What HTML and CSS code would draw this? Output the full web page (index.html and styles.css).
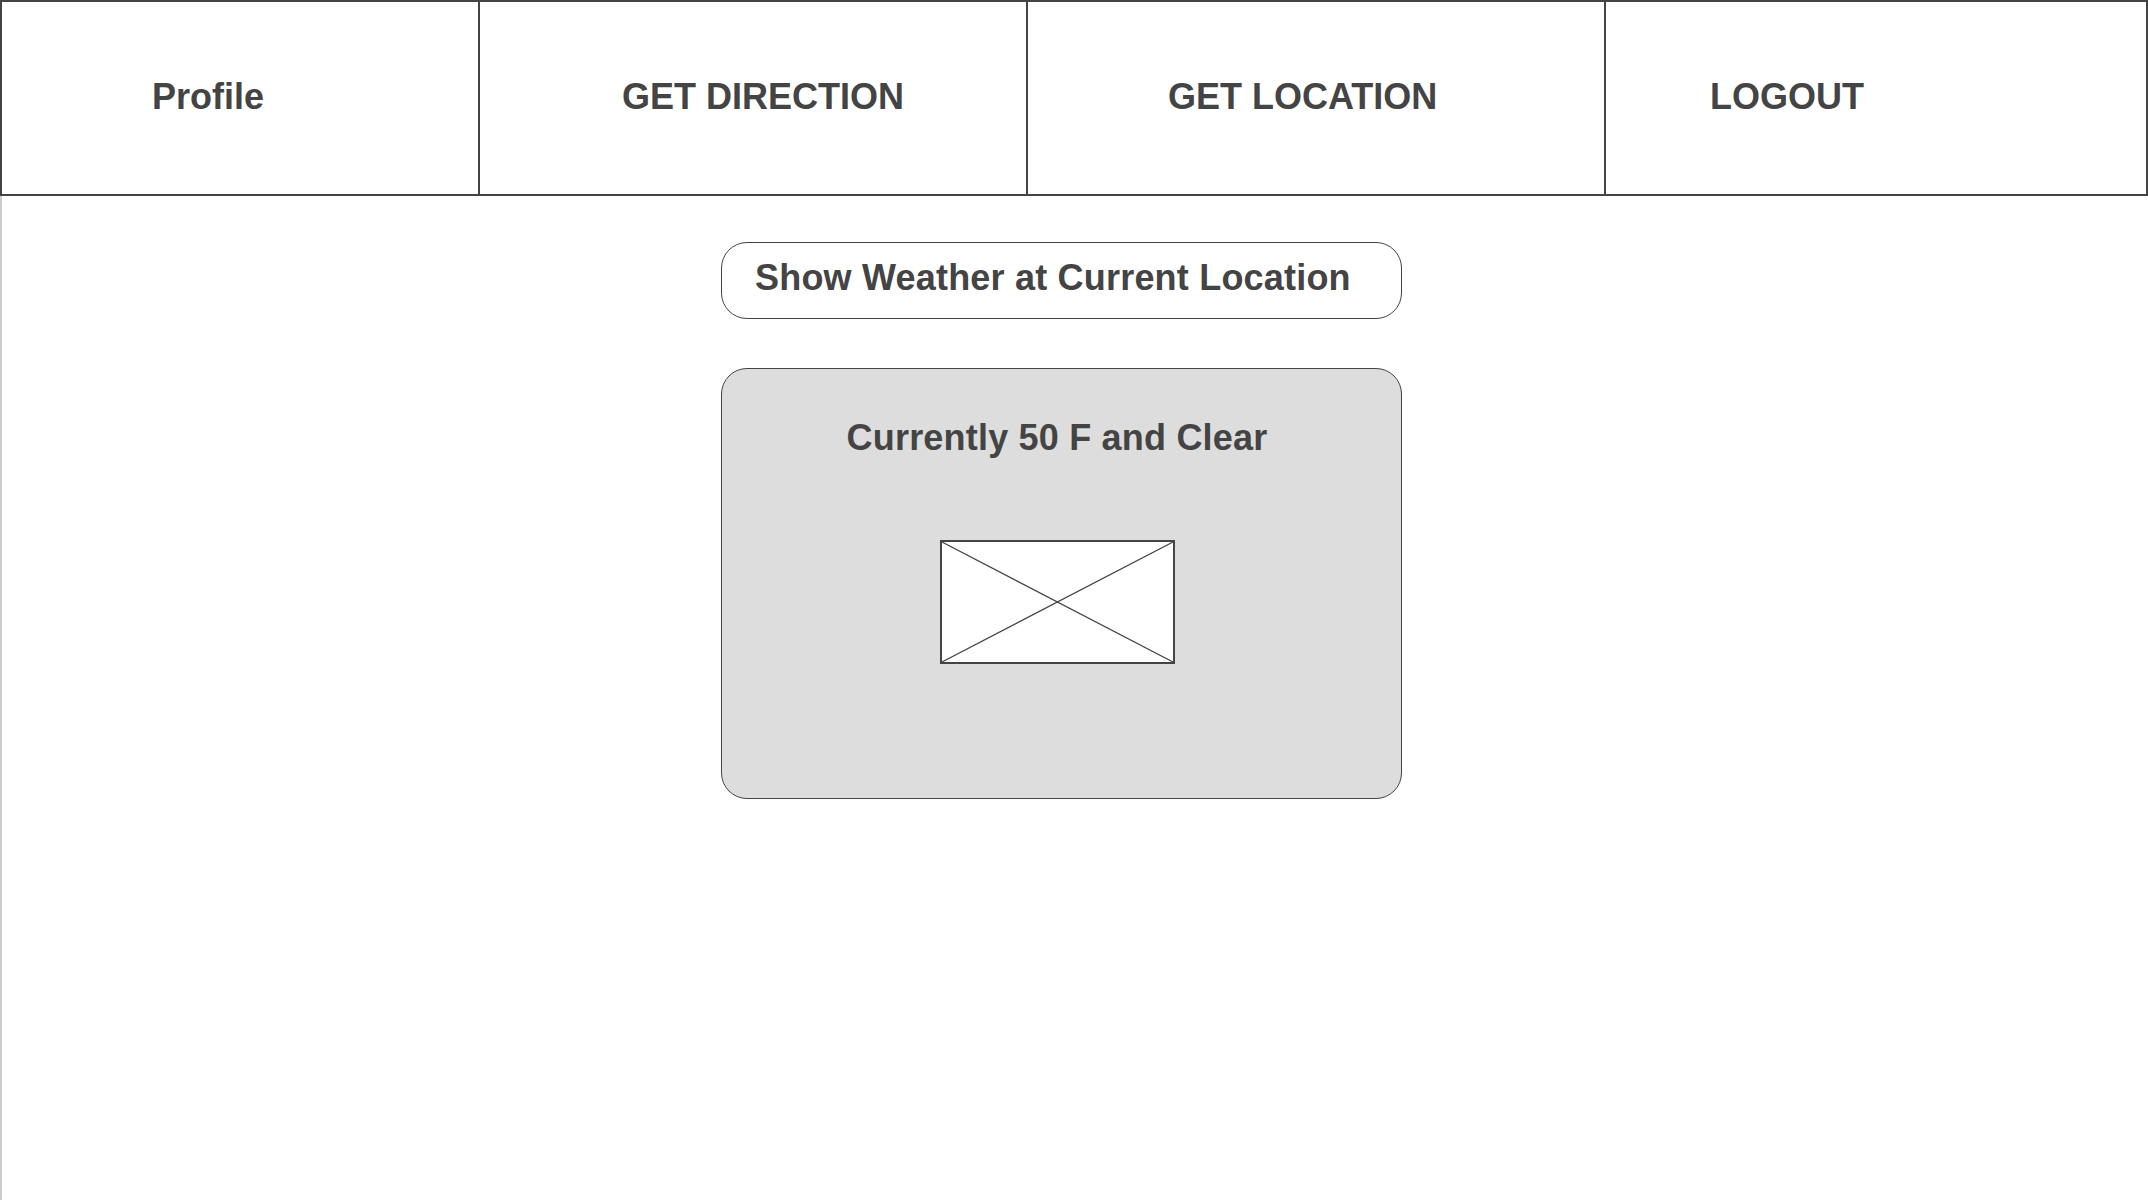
FILE: index.html
```html
<!DOCTYPE html>
<html lang="en">
<head>
<meta charset="utf-8">
<title>Weather</title>
<link rel="stylesheet" href="styles.css">
</head>
<body>
<nav class="nav">
  <div class="nav-cell cell-profile">Profile</div>
  <div class="nav-cell cell-direction">GET DIRECTION</div>
  <div class="nav-cell cell-location">GET LOCATION</div>
  <div class="nav-cell cell-logout">LOGOUT</div>
</nav>
<main class="main">
  <button class="weather-btn" type="button">Show Weather at Current Location</button>
  <section class="card">
    <h2 class="card-title">Currently 50 F and Clear</h2>
    <div class="placeholder">
      <svg width="235" height="124" viewBox="0 0 235 124" xmlns="http://www.w3.org/2000/svg">
        <rect x="1" y="1" width="233" height="122" fill="#ffffff" stroke="#444444" stroke-width="2"/>
        <line x1="2" y1="2" x2="233" y2="122" stroke="#444444" stroke-width="1.4"/>
        <line x1="233" y1="2" x2="2" y2="122" stroke="#444444" stroke-width="1.4"/>
      </svg>
    </div>
  </section>
</main>
</body>
</html>
```

FILE: styles.css
```css
html, body {
  margin: 0;
  padding: 0;
  background: #ffffff;
}

body {
  font-family: "Liberation Sans", Arial, sans-serif;
  color: #444444;
  width: 2148px;
  height: 1200px;
  overflow: hidden;
}

.nav {
  display: flex;
  height: 196px;
  box-sizing: border-box;
  border: 2px solid #444444;
}

.nav-cell {
  display: flex;
  align-items: center;
  box-sizing: border-box;
  font-size: 36px;
  font-weight: bold;
  white-space: nowrap;
  padding-bottom: 3px;
}

.cell-profile {
  width: 478px;
  padding-left: 150px;
  border-right: 2px solid #444444;
}

.cell-direction {
  width: 548px;
  padding-left: 142px;
  border-right: 2px solid #444444;
}

.cell-location {
  width: 578px;
  padding-left: 140px;
  border-right: 2px solid #444444;
}

.cell-logout {
  flex: 1;
  padding-left: 104px;
}

.main {
  box-sizing: border-box;
  height: 1004px;
  border-left: 2px solid #cccccc;
  padding-top: 46px;
  padding-left: 719px;
  display: flex;
  flex-direction: column;
  align-items: flex-start;
}

.weather-btn {
  box-sizing: border-box;
  width: 681px;
  height: 77px;
  margin: 0;
  padding: 14px 0 0 33px;
  border: 1.6px solid #444444;
  border-radius: 26px;
  background: #ffffff;
  font-family: "Liberation Sans", Arial, sans-serif;
  font-size: 36px;
  font-weight: bold;
  letter-spacing: 0.2px;
  color: #444444;
  text-align: left;
  display: flex;
  align-items: flex-start;
  line-height: normal;
}

.card {
  box-sizing: border-box;
  width: 681px;
  height: 431px;
  margin-top: 49px;
  border: 1.6px solid #444444;
  border-radius: 26px;
  background: #dddddd;
  padding-top: 48px;
}

.card-title {
  margin: 0;
  font-size: 36px;
  font-weight: bold;
  letter-spacing: 0.2px;
  line-height: normal;
  text-align: center;
  padding-right: 9px;
  color: #444444;
}

.placeholder {
  width: 235px;
  height: 124px;
  margin-top: 81px;
  margin-left: 218px;
}

.placeholder svg {
  display: block;
}
```
